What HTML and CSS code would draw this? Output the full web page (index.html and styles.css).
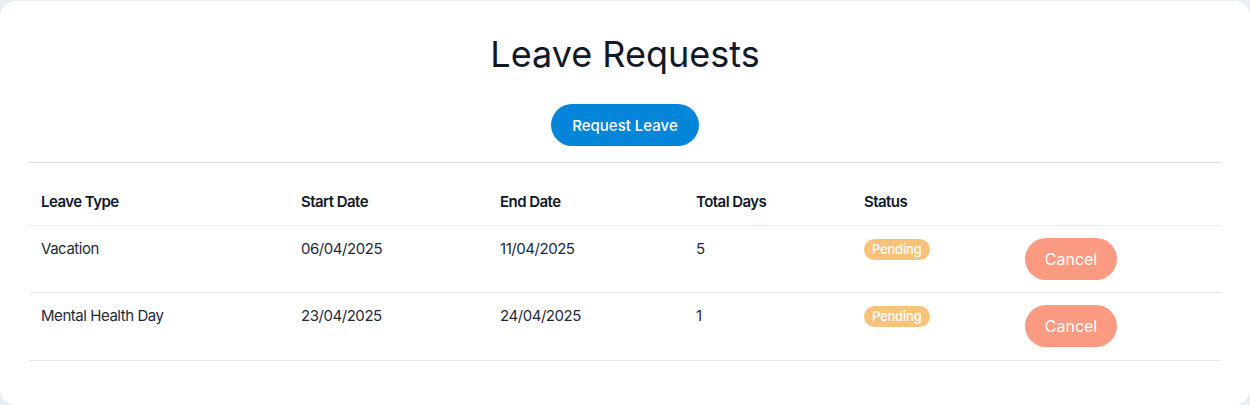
FILE: index.html
```html
<!DOCTYPE html>
<html lang="en">
<head>
<meta charset="utf-8">
<title>Leave Requests</title>
<link rel="stylesheet" href="styles.css">
</head>
<body>
<div class="card">
  <h1 class="title">Leave Requests</h1>
  <div class="actions"><button class="btn-primary">Request Leave</button></div>
  <hr class="divider">
  <table class="table">
    <colgroup>
      <col class="c1"><col class="c2"><col class="c3"><col class="c4"><col class="c5"><col class="c6">
    </colgroup>
    <thead>
      <tr><th>Leave Type</th><th>Start Date</th><th>End Date</th><th>Total Days</th><th>Status</th><th></th></tr>
    </thead>
    <tbody>
      <tr>
        <td>Vacation</td><td>06/04/2025</td><td>11/04/2025</td><td>5</td>
        <td><span class="badge">Pending</span></td>
        <td><button class="btn-cancel">Cancel</button></td>
      </tr>
      <tr>
        <td>Mental Health Day</td><td>23/04/2025</td><td>24/04/2025</td><td>1</td>
        <td><span class="badge">Pending</span></td>
        <td><button class="btn-cancel">Cancel</button></td>
      </tr>
    </tbody>
  </table>
</div>
</body>
</html>
```

FILE: styles.css
```css
* { box-sizing: border-box; }
html, body { margin: 0; }
body {
  background: #e9eef5;
  font-family: Inter, "Noto Sans", sans-serif;
  color: #1e293b;
  padding-top: 1px;
}
.card {
  background: #ffffff;
  border-radius: 16px;
  height: 404px;
  padding: 26px 29px 0;
}
.title {
  margin: 0;
  text-align: center;
  font-size: 36px;
  font-weight: 400;
  line-height: 54px;
  color: #111827;
}
.actions {
  display: flex;
  justify-content: center;
  margin-top: 23px;
}
.btn-primary {
  font-family: inherit;
  background: #0385da;
  color: #fff;
  border: none;
  border-radius: 999px;
  height: 42px;
  padding: 0 21px;
  font-size: 15px;
  font-weight: 500;
}
.divider {
  margin: 16px 0 14px;
  border: none;
  border-top: 1px solid #dcdcdc;
}
.table {
  width: 100%;
  border-collapse: collapse;
  table-layout: fixed;
}
.c1 { width: 260px; }
.c2 { width: 199px; }
.c3 { width: 196px; }
.c4 { width: 168px; }
.c5 { width: 161px; }
.table th, .table td {
  text-align: left;
  vertical-align: top;
  padding: 13px 12px 11px;
  font-size: 15px;
  line-height: 24px;
  border-bottom: 1px solid #e5e9f0;
  letter-spacing: -0.45px;
}
.table th {
  font-weight: 600;
  color: #111827;
  letter-spacing: -0.55px;
}
.table td { font-weight: 400; padding: 11px 12px 12px; }
.table tbody tr:last-child td { padding-bottom: 13px; }
.badge {
  display: inline-block;
  background: #f8c27a;
  color: #fff;
  font-size: 13px;
  font-weight: 500;
  line-height: 21px;
  padding: 0 8px;
  border-radius: 999px;
  vertical-align: top;
  margin-top: 2px;
  letter-spacing: -0.2px;
}
.btn-cancel {
  font-family: inherit;
  display: block;
  background: #fa9a80;
  color: #fff;
  border: none;
  border-radius: 999px;
  height: 42px;
  width: 92px;
  font-size: 16px;
  font-weight: 400;
  margin-top: 1px;
}
```
